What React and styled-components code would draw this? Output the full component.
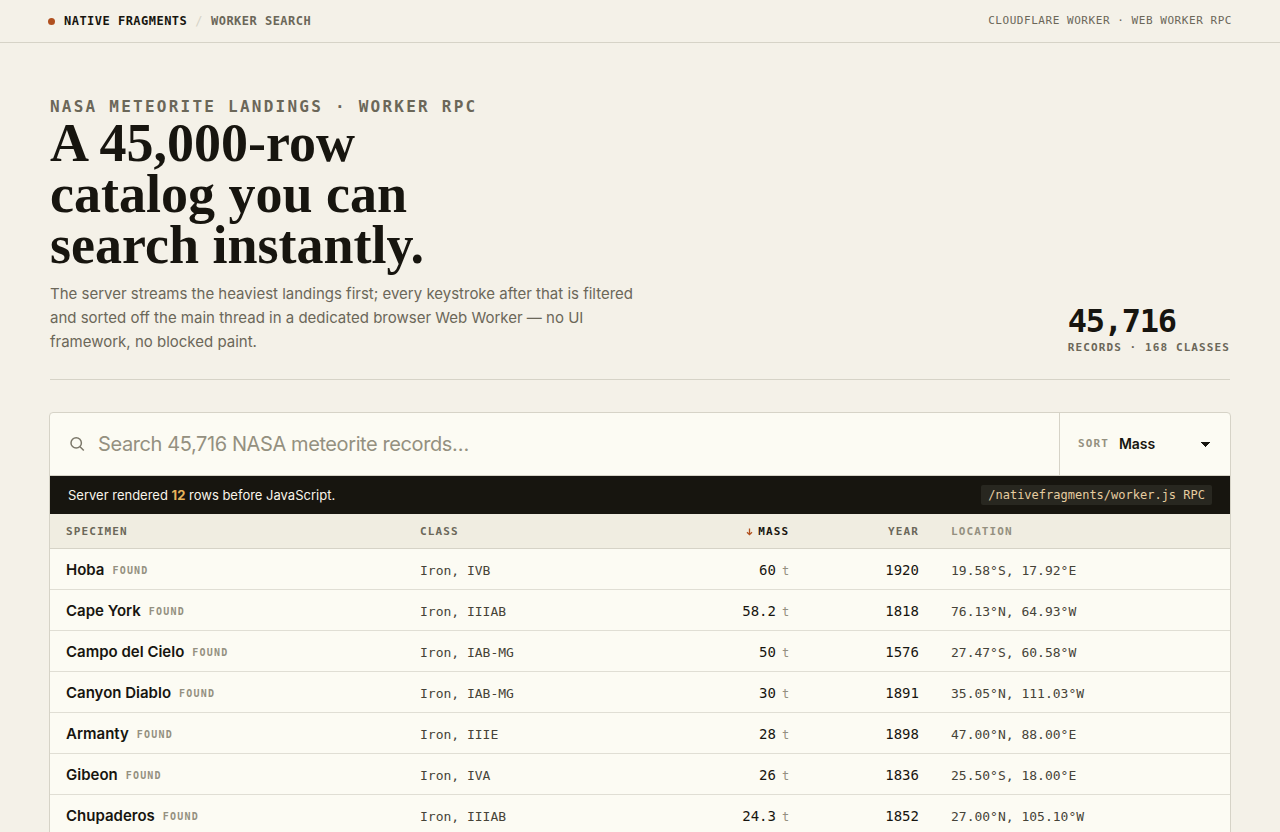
import React, { useState } from "react";
import styled, { createGlobalStyle, ThemeProvider } from "styled-components";

const theme = {
  ink: "#17150f",
  body: "#464338",
  muted: "#6b6759",
  faint: "#949080",
  icon: "#7c786a",
  line: "#d6d3c7",
  rowLine: "#e0ded4",
  paper: "#f4f1e8",
  panel: "#fcfbf3",
  head: "#f0ede1",
  rust: "#b0501f",
  amber: "#e8b45c",
  sans: 'Inter, "Liberation Sans", sans-serif',
  mono: '"DejaVu Sans Mono", "Liberation Mono", monospace',
  serif: '"Liberation Serif", serif',
};

const GlobalStyle = createGlobalStyle`
  *, *::before, *::after { box-sizing: border-box; }
  html { scrollbar-width: none; }
  body {
    margin: 0;
    background: ${theme.paper};
    color: ${theme.ink};
    font-family: ${theme.sans};
    -webkit-font-smoothing: antialiased;
  }
`;

const TopBar = styled.header`
  display: flex;
  align-items: center;
  justify-content: space-between;
  height: 43px;
  padding: 0 48px;
  border-bottom: 1px solid ${(p) => p.theme.line};
  font: 400 11px/18px ${(p) => p.theme.mono};
  letter-spacing: 0.05em;
  color: ${(p) => p.theme.muted};
`;

const Crumbs = styled.nav`
  display: flex;
  align-items: center;
  font: 700 12px/16px ${(p) => p.theme.mono};
  letter-spacing: 0.04em;
`;

const Dot = styled.span`
  width: 7px;
  height: 7px;
  margin-right: 9px;
  border-radius: 50%;
  background: ${(p) => p.theme.rust};
`;

const Crumb = styled.a`
  color: ${(p) => (p.$current ? p.theme.muted : p.theme.ink)};
  text-decoration: none;
`;

const Slash = styled.span`
  margin: 0 8px;
  font-weight: 400;
  color: ${(p) => p.theme.line};
`;

const Main = styled.main`
  padding: 53px 49px 0;
`;

const Hero = styled.section`
  display: flex;
  align-items: flex-end;
  justify-content: space-between;
  margin: 0 1px 32px;
  padding-bottom: 24px;
  border-bottom: 1px solid ${(p) => p.theme.line};
`;

const Eyebrow = styled.p`
  margin: 0;
  font: 700 16px/22px ${(p) => p.theme.mono};
  letter-spacing: 0.14em;
  color: ${(p) => p.theme.muted};
`;

const Title = styled.h1`
  max-width: 460px;
  margin: 0 0 11px;
  font: 700 54px/51px ${(p) => p.theme.serif};
  color: ${(p) => p.theme.ink};
`;

const Lede = styled.p`
  max-width: 600px;
  margin: 0 0 1px;
  font: 400 15px/24px ${(p) => p.theme.sans};
  color: ${(p) => p.theme.muted};
`;

const Stat = styled.div`
  display: flex;
  flex-direction: column;
  gap: 4px;
`;

const StatValue = styled.strong`
  font: 700 32px/32px ${(p) => p.theme.mono};
  letter-spacing: -0.04em;
`;

const StatLabel = styled.span`
  font: 700 11px/14px ${(p) => p.theme.mono};
  letter-spacing: 0.1em;
  color: ${(p) => p.theme.muted};
`;

const Panel = styled.section`
  border: 1px solid ${(p) => p.theme.line};
  border-radius: 4px;
  overflow: hidden;
  background: ${(p) => p.theme.panel};
`;

const Controls = styled.form`
  display: flex;
  height: 63px;
  border-bottom: 1px solid ${(p) => p.theme.line};
`;

const SearchField = styled.label`
  display: flex;
  flex: 1;
  align-items: center;
  gap: 12px;
  padding: 0 20px;
  color: ${(p) => p.theme.icon};
`;

const SearchInput = styled.input`
  flex: 1;
  min-width: 0;
  height: 40px;
  padding: 0;
  border: 0;
  outline: 0;
  background: transparent;
  font: 400 20px/28px ${(p) => p.theme.sans};
  letter-spacing: -0.02em;
  color: ${(p) => p.theme.ink};
  &::placeholder {
    color: ${(p) => p.theme.faint};
    opacity: 1;
  }
`;

const SortField = styled.label`
  display: flex;
  align-items: center;
  gap: 10px;
  width: 171px;
  padding: 0 18px;
  border-left: 1px solid ${(p) => p.theme.line};
`;

const SortCaption = styled.span`
  font: 700 11px/16px ${(p) => p.theme.mono};
  letter-spacing: 0.1em;
  color: ${(p) => p.theme.faint};
`;

const SelectWrap = styled.span`
  display: flex;
  flex: 1;
  align-items: center;
`;

const SortSelect = styled.select`
  flex: 1;
  min-width: 0;
  padding: 0;
  border: 0;
  outline: 0;
  appearance: none;
  background: transparent;
  font: 600 14px/20px ${(p) => p.theme.sans};
  color: ${(p) => p.theme.ink};
`;

const StatusBar = styled.div`
  display: flex;
  align-items: center;
  justify-content: space-between;
  height: 38px;
  padding: 0 18px;
  background: ${(p) => p.theme.ink};
  font: 400 13px/20px ${(p) => p.theme.sans};
  color: #f7f4ea;
  b {
    font-weight: 700;
    color: ${(p) => p.theme.amber};
  }
`;

const Endpoint = styled.code`
  padding: 0 7px;
  border-radius: 2px;
  background: #282720;
  font: 400 12px/20px ${(p) => p.theme.mono};
  color: #e6cda0;
`;

const Table = styled.table`
  width: 100%;
  table-layout: fixed;
  border-collapse: separate;
  border-spacing: 0;
`;

const HeadCell = styled.th`
  width: ${(p) => p.$width};
  height: 35px;
  padding: 2px 16px 0;
  border-bottom: 1px solid ${(p) => p.theme.line};
  background: ${(p) => p.theme.head};
  text-align: ${(p) => (p.$right ? "right" : "left")};
  font: 700 11px/16px ${(p) => p.theme.mono};
  letter-spacing: 0.1em;
  color: ${(p) => p.theme.faint};
`;

const SortButton = styled.button`
  display: inline-flex;
  align-items: center;
  gap: 5px;
  padding: 0;
  border: 0;
  background: none;
  font: inherit;
  letter-spacing: inherit;
  color: ${(p) => (p.$active ? p.theme.ink : p.theme.muted)};
  cursor: pointer;
`;

const Cell = styled.td`
  height: 41px;
  padding: 4px 16px 0;
  border-bottom: 1px solid ${(p) => p.theme.rowLine};
  text-align: ${(p) => (p.$right ? "right" : "left")};
  white-space: nowrap;
  font: 400 ${(p) => p.$size}px/20px ${(p) => p.theme.mono};
  color: ${(p) => (p.$strong ? p.theme.ink : p.theme.body)};
`;

const NumberCell = styled(Cell)`
  padding-top: 2px;
`;

const NameCell = styled(Cell)`
  padding-top: 2px;
  font: 600 15px/20px ${(p) => p.theme.sans};
  color: ${(p) => p.theme.ink};
`;

const Fall = styled.span`
  margin-left: 8px;
  vertical-align: 1px;
  font: 700 10px/16px ${(p) => p.theme.mono};
  letter-spacing: 0.12em;
  color: ${(p) => p.theme.faint};
`;

const Unit = styled.span`
  margin-left: 6px;
  font-size: 12px;
  color: ${(p) => p.theme.faint};
`;

const SearchIcon = () => (
  <svg width="16" height="16" viewBox="0 0 16 16" fill="none" stroke="currentColor" strokeWidth="1.5" aria-hidden="true">
    <circle cx="6.2" cy="6.9" r="5.2" />
    <path d="M10 10.7 L13.8 14.5" />
  </svg>
);

const Caret = () => (
  <svg width="11" height="6" viewBox="0 0 11 6" fill="#17150f" shapeRendering="crispEdges" aria-hidden="true">
    <path d="M0 0.5 H9 V1.6 L5 5.5 H4 L0 1.6 Z" />
  </svg>
);

const ArrowDown = () => (
  <svg width="7" height="8" viewBox="0 0 7 8" fill="none" stroke="#b0501f" strokeWidth="1.3" aria-hidden="true">
    <path d="M3.5 0.5 V7 M1 4.2 L3.5 6.7 L6 4.2" />
  </svg>
);

const columns = [
  { label: "SPECIMEN", width: "30%", sortable: true },
  { label: "CLASS", width: "22%", sortable: true },
  { label: "MASS", width: "12%", sortable: true, right: true, active: true },
  { label: "YEAR", width: "11%", sortable: true, right: true },
  { label: "LOCATION", width: "25%" },
];

const rows = [
  ["Hoba", "Iron, IVB", "60", "1920", "19.58°S, 17.92°E"],
  ["Cape York", "Iron, IIIAB", "58.2", "1818", "76.13°N, 64.93°W"],
  ["Campo del Cielo", "Iron, IAB-MG", "50", "1576", "27.47°S, 60.58°W"],
  ["Canyon Diablo", "Iron, IAB-MG", "30", "1891", "35.05°N, 111.03°W"],
  ["Armanty", "Iron, IIIE", "28", "1898", "47.00°N, 88.00°E"],
  ["Gibeon", "Iron, IVA", "26", "1836", "25.50°S, 18.00°E"],
  ["Chupaderos", "Iron, IIIAB", "24.3", "1852", "27.00°N, 105.10°W"],
];

export default function App() {
  const [query, setQuery] = useState("");
  return (
    <ThemeProvider theme={theme}>
      <GlobalStyle />
      <TopBar>
        <Crumbs>
          <Dot />
          <Crumb href="#">NATIVE FRAGMENTS</Crumb>
          <Slash>/</Slash>
          <Crumb href="#search" $current>WORKER SEARCH</Crumb>
        </Crumbs>
        <span>CLOUDFLARE WORKER · WEB WORKER RPC</span>
      </TopBar>
      <Main>
        <Hero>
          <div>
            <Eyebrow>NASA METEORITE LANDINGS · WORKER RPC</Eyebrow>
            <Title>A 45,000-row catalog you can search instantly.</Title>
            <Lede>
              The server streams the heaviest landings first; every keystroke after that is filtered
              and sorted off the main thread in a dedicated browser Web Worker — no UI framework, no
              blocked paint.
            </Lede>
          </div>
          <Stat>
            <StatValue>45,716</StatValue>
            <StatLabel>RECORDS · 168 CLASSES</StatLabel>
          </Stat>
        </Hero>
        <Panel id="search">
          <Controls onSubmit={(e) => e.preventDefault()}>
            <SearchField>
              <SearchIcon />
              <SearchInput
                type="text"
                aria-label="Search records"
                placeholder="Search 45,716 NASA meteorite records…"
                value={query}
                onChange={(e) => setQuery(e.target.value)}
              />
            </SearchField>
            <SortField>
              <SortCaption>SORT</SortCaption>
              <SelectWrap>
                <SortSelect defaultValue="Mass">
                  <option>Mass</option>
                </SortSelect>
                <Caret />
              </SelectWrap>
            </SortField>
          </Controls>
          <StatusBar>
            <span>Server rendered <b>12</b> rows before JavaScript.</span>
            <Endpoint>/nativefragments/worker.js RPC</Endpoint>
          </StatusBar>
          <Table>
            <thead>
              <tr>
                {columns.map((c) => (
                  <HeadCell key={c.label} $width={c.width} $right={c.right} scope="col">
                    {c.sortable ? (
                      <SortButton type="button" $active={c.active}>
                        {c.active && <ArrowDown />}
                        {c.label}
                      </SortButton>
                    ) : (
                      c.label
                    )}
                  </HeadCell>
                ))}
              </tr>
            </thead>
            <tbody>
              {rows.map(([name, kind, mass, year, place]) => (
                <tr key={name}>
                  <NameCell>{name}<Fall>FOUND</Fall></NameCell>
                  <Cell $size={13}>{kind}</Cell>
                  <NumberCell $size={14} $right $strong>{mass}<Unit>t</Unit></NumberCell>
                  <NumberCell $size={14} $right $strong>{year}</NumberCell>
                  <Cell $size={13}>{place}</Cell>
                </tr>
              ))}
            </tbody>
          </Table>
        </Panel>
      </Main>
    </ThemeProvider>
  );
}
